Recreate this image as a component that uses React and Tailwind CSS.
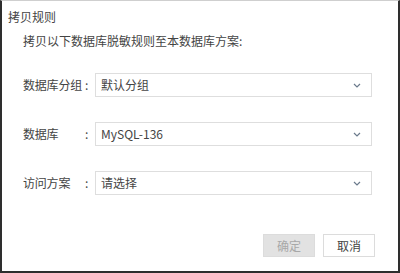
import { useState } from 'react';

const font = { fontFamily: '"Noto Sans CJK SC", "Noto Sans", sans-serif' };

function Chevron() {
  return (
    <svg width="8" height="5" viewBox="0 0 8 5" className="shrink-0">
      <polyline points="1,1 4,4 7,1" fill="none" stroke="#6b7a8c" strokeWidth="1.2" />
    </svg>
  );
}

function SelectRow({ label, value }) {
  return (
    <div className="flex items-center h-[24px]">
      <span className="w-[62px] text-[12px] tracking-[-0.2px] text-[#444]">{label}</span>
      <span className="w-[10px] text-[12px] text-[#444]">:</span>
      <div className="w-[277px] h-[24px] border border-[#dedede] bg-white flex items-center justify-between pl-[5px] pr-[10px]">
        <span className="text-[12px] text-[#444]">{value}</span>
        <Chevron />
      </div>
    </div>
  );
}

export default function App() {
  const [rows] = useState([
    { label: '数据库分组', value: '默认分组' },
    { label: '数据库', value: 'MySQL-136' },
    { label: '访问方案', value: '请选择' },
  ]);

  return (
    <div style={font} className="w-[400px] h-[273px] bg-white border-t border-t-[#cfcfcf] border-l-2 border-l-[#2e2e2e] border-r-2 border-r-[#2e2e2e] border-b-2 border-b-[#2e2e2e] flex flex-col pt-[8px]">
      <div className="pl-[6px] h-[16px] leading-[16px] text-[12px] text-[#444]">拷贝规则</div>
      <div className="pl-[21px] mt-[8px] h-[16px] leading-[16px] text-[12px] text-[#444]">拷贝以下数据库脱敏规则至本数据库方案:</div>
      <div className="pl-[21px] mt-[24px] flex flex-col gap-[25px]">
        {rows.map((r) => (
          <SelectRow key={r.label} {...r} />
        ))}
      </div>
      <div className="mt-[39px] flex justify-end gap-[8px] pr-[23px]">
        <button className="w-[52px] h-[23px] bg-[#e2e2e2] border border-[#dcdcdc] text-[12px] text-[#a8a8a8]">确定</button>
        <button className="w-[52px] h-[23px] bg-white border border-[#dcdcdc] text-[12px] text-[#444]">取消</button>
      </div>
    </div>
  );
}
